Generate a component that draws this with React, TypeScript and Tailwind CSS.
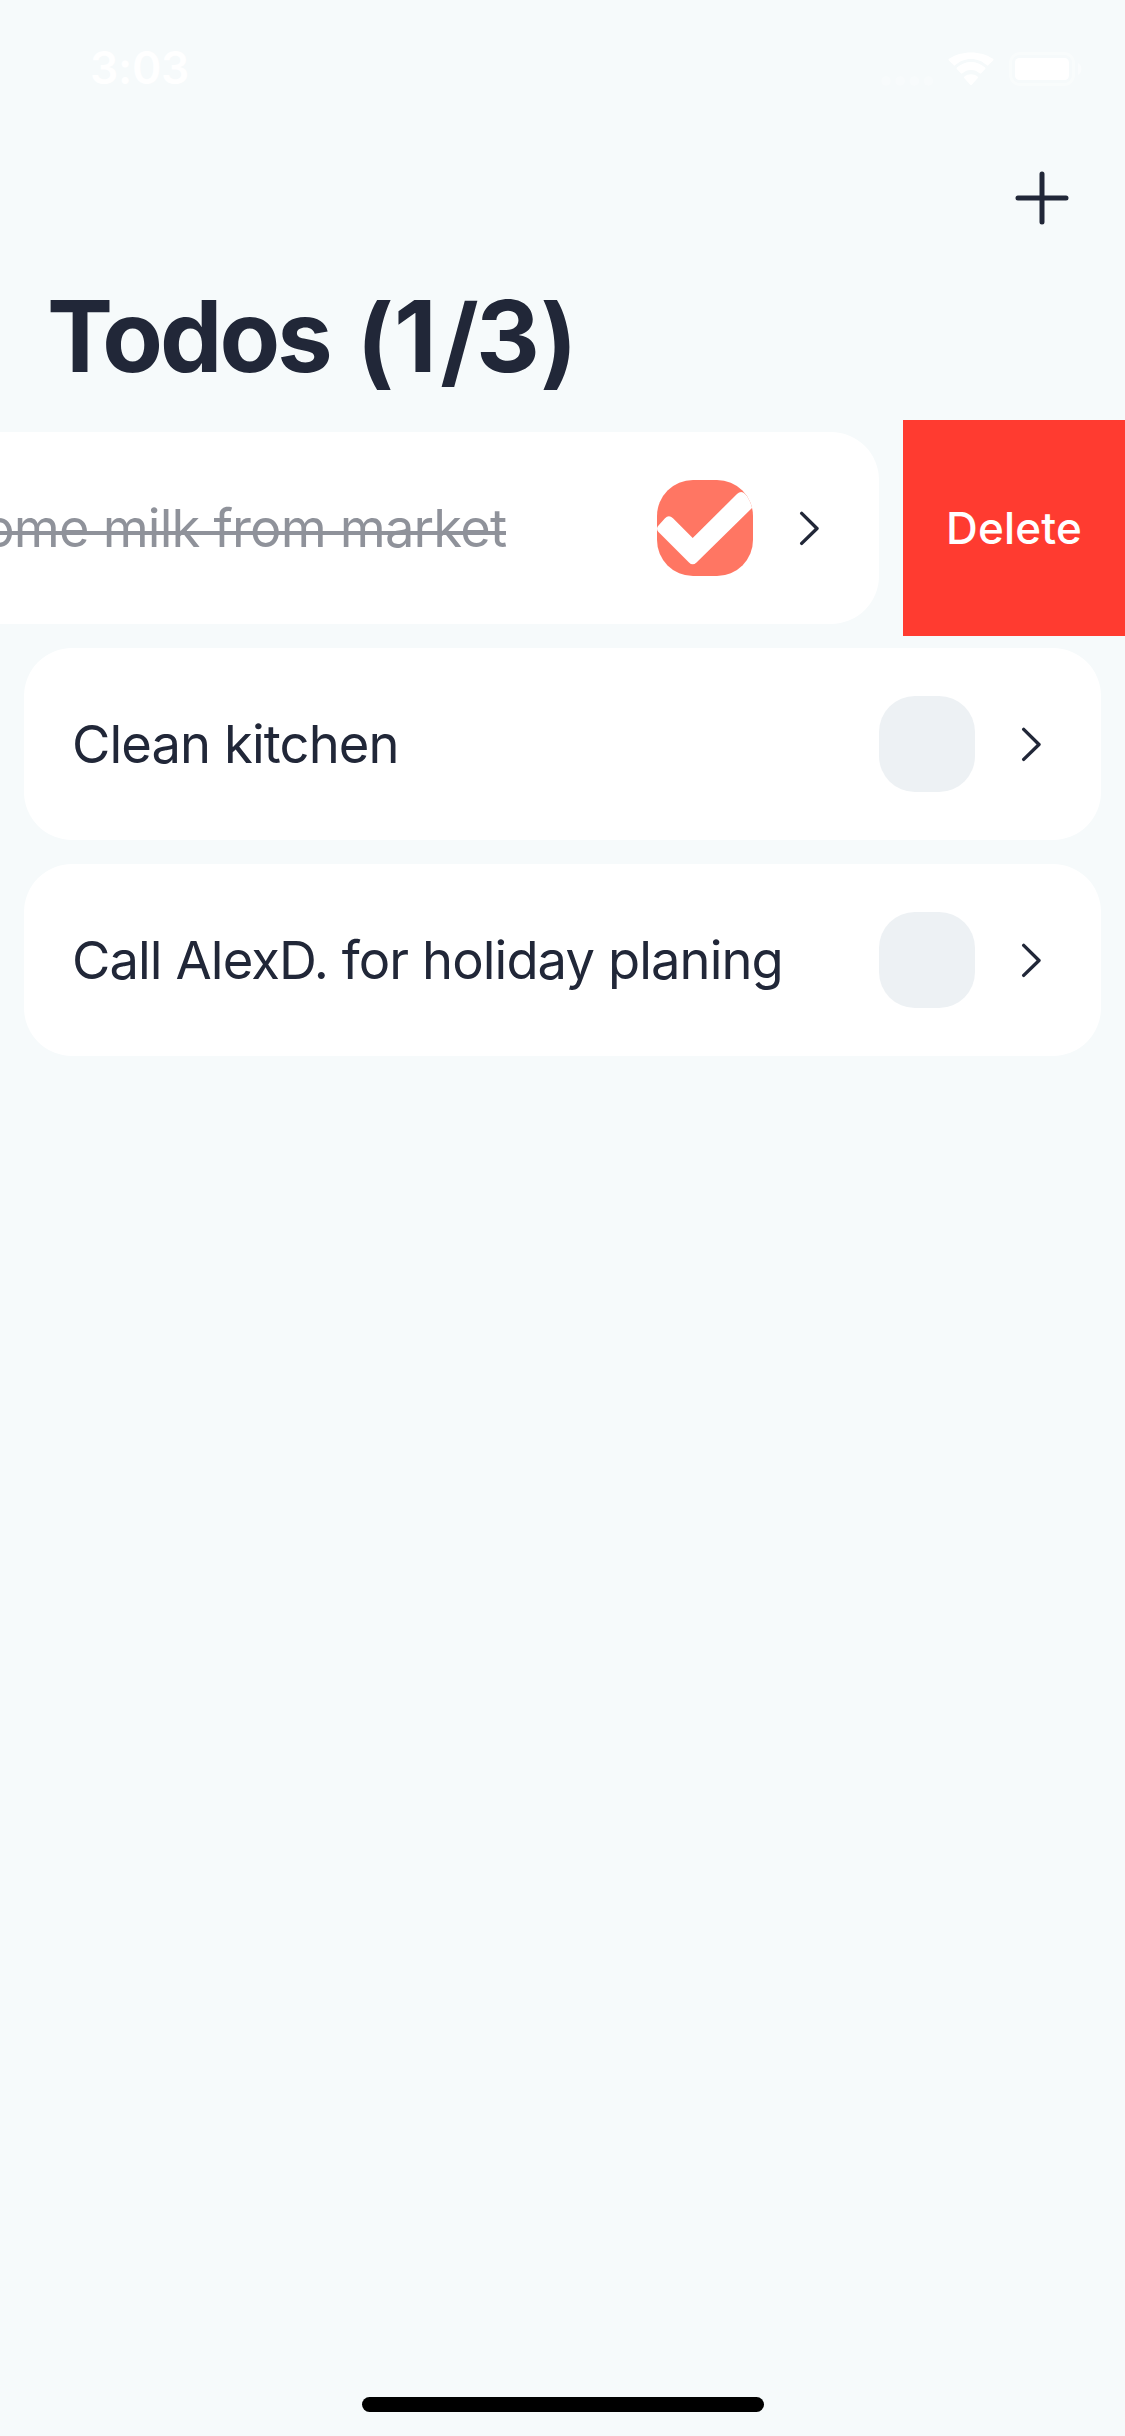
type Todo = { title: string; done: boolean };

const todos: Todo[] = [
  { title: "Buy some milk from market", done: true },
  { title: "Clean kitchen", done: false },
  { title: "Call AlexD. for holiday planing", done: false },
];

function StatusBar() {
  return (
    <header className="flex h-[137px] items-center justify-between pr-[43px] pl-[90px] text-white">
      <span className="text-[44.5px] leading-none font-semibold tracking-[-0.3px]">3:03</span>
      <div className="flex items-center">
        <svg className="mt-6 mr-3.5 h-[10px] w-[53px]" viewBox="0 0 53 10" fill="currentColor" fillOpacity="0.22">
          <circle cx="5" cy="5" r="5" />
          <circle cx="19.2" cy="5" r="5" />
          <circle cx="33.3" cy="5" r="5" />
          <circle cx="47.5" cy="5" r="5" />
        </svg>
        <svg className="mr-[15px] h-[34px] w-[46px]" viewBox="0 0 46 34" fill="currentColor">
          <path d="M23 7c6.1 0 11.700 2.400 15.800 6.300a1.050 1.050 0 0 0 1.500 0l4.800-4.900a1.100 1.100 0 0 0 0-1.600C32.800-1.700 13.200-1.700.9 6.800a1.100 1.100 0 0 0 0 1.600l4.800 4.900a1.050 1.050 0 0 0 1.500 0C11.300 9.400 16.900 7 23 7Z" />
          <path d="M23 18c3.300 0 6.300 1.200 8.600 3.300a1.100 1.100 0 0 0 1.500 0l4-4.100a1.100 1.100 0 0 0 0-1.600c-8-7.500-20.200-7.500-28.200 0a1.100 1.100 0 0 0 0 1.600l4 4.100a1.100 1.100 0 0 0 1.500 0C16.700 19.200 19.700 18 23 18Z" />
          <path d="M29.600 26.200a1.100 1.100 0 0 0 0-1.600c-3.800-3.200-9.400-3.200-13.200 0a1.100 1.100 0 0 0 0 1.600l5.800 6.500a1.100 1.100 0 0 0 1.600 0Z" />
        </svg>
        <svg className="h-[34px] w-[73px]" viewBox="0 0 73 34" fill="currentColor">
          <rect x="1.500" y="1.500" width="63" height="31" rx="9.500" fill="none" stroke="currentColor" strokeOpacity="0.4" strokeWidth="3" />
          <rect x="6" y="6" width="54" height="22" rx="4.500" />
          <path d="M69 11c4.600 2.200 4.600 9.800 0 12Z" fillOpacity="0.45" />
        </svg>
      </div>
    </header>
  );
}

function Chevron() {
  return (
    <svg className="h-9 w-5" viewBox="0 0 20 36" fill="none" stroke="currentColor" strokeWidth="3.4" strokeLinecap="round" strokeLinejoin="round">
      <path d="M2.700 3.400 18 18.500 2.700 33.400" />
    </svg>
  );
}

function Checkbox({ checked }: { checked: boolean }) {
  return checked ? (
    <span className="block size-24 overflow-hidden rounded-[36px] bg-[#ff7663]">
      <svg className="size-24" viewBox="0 0 96 96" fill="white">
        <path d="M1.500 45.500 8 38.300Q11.800 34.200 16 38.300L35.700 58 80 14Q84.200 9.800 88.200 14L95 21Q98 24.500 95 28L39.500 82.500Q35.700 86.200 32 82.500L1.500 52Q-1.500 48.700 1.500 45.500Z" />
      </svg>
    </span>
  ) : (
    <span className="block size-24 rounded-[36px] bg-[#edf1f4]" />
  );
}

function TodoCard({ todo }: { todo: Todo }) {
  return (
    <article className="flex h-48 w-[1077px] shrink-0 items-center rounded-[48px] bg-white pr-[60px] pl-12">
      <p className="flex-1 text-[52.5px] leading-none tracking-[-0.9px] whitespace-nowrap">
        {todo.done ? (
          <span className="relative tracking-[-0.84px] opacity-50">
            {todo.title}
            <span className="absolute top-[35px] left-0 h-1 w-full bg-current" />
          </span>
        ) : (
          todo.title
        )}
      </p>
      <Checkbox checked={todo.done} />
      <span className="ml-[46px]">
        <Chevron />
      </span>
    </article>
  );
}

export default function App() {
  return (
    <div className="flex h-[2436px] w-[1125px] flex-col overflow-hidden bg-[#f6fafb] font-[Inter,sans-serif] text-[#212738]">
      <StatusBar />
      <div className="flex h-[123px] items-center justify-end pr-[56px] pb-0.5">
        <svg className="size-[54px]" viewBox="0 0 54 54" stroke="currentColor" strokeWidth="5" strokeLinecap="round">
          <path d="M27 3v48M3 27h48" />
        </svg>
      </div>
      <h1 className="h-[160px] pl-[47px] text-[99px] leading-[152px] font-bold tracking-[0.35px] whitespace-nowrap">
        <span className="mr-[3px] tracking-[-3px]">Todos</span>{" "}
        <span className="align-[-4px]">(</span>1
        <span className="mr-[-3px] ml-[3px] align-[-4px]">/</span>3
        <span className="align-[-4px]">)</span>
      </h1>
      <main className="flex flex-col">
        <div className="flex h-[216px] justify-end">
          <div className="flex w-[903px] items-center justify-end pr-6">
            <TodoCard todo={todos[0]} />
          </div>
          <button className="flex w-[222px] items-center justify-center bg-[#ff3b30] text-[44px] leading-none font-medium tracking-[0.2px] text-white">
            Delete
          </button>
        </div>
        {todos.slice(1).map((todo) => (
          <div key={todo.title} className="flex h-[216px] items-center justify-center">
            <TodoCard todo={todo} />
          </div>
        ))}
      </main>
      <footer className="mt-auto flex justify-center pb-6">
        <div className="h-[15px] w-[402px] rounded-full bg-black" />
      </footer>
    </div>
  );
}
